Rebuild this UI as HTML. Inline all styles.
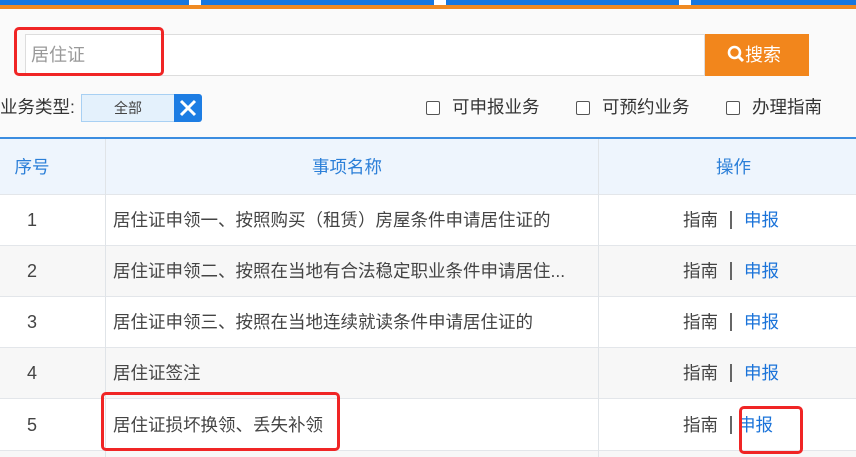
<!DOCTYPE html>
<html><head><meta charset="utf-8"><style>
*{margin:0;padding:0;box-sizing:border-box}
html,body{width:856px;height:457px;overflow:hidden}
body{background:#fafafa;font-family:"Liberation Sans","Noto Sans CJK SC",sans-serif;position:relative}
.a{position:absolute}
.gap{background:#fff;top:0;height:5px}
.row{position:absolute;left:0;width:856px;height:51px;border-bottom:1px solid #e3e6ea;font-size:17.5px;color:#444}
.row div{position:absolute;top:0;line-height:51px}
.n{left:0;width:64px;text-align:center;font-size:18px}
.t{left:113px}
.op{left:683px;color:#444}
.op span{color:#1a73d9}
.op i{font-style:normal;display:inline-block;width:2px;height:18px;background:#666;vertical-align:-3px;margin:0 12px}
.red{position:absolute;border:3px solid #f02525;border-radius:5px}
.cb{display:inline-block;width:14px;height:14px;border:1px solid #555;border-radius:2px;background:#fff;vertical-align:-2px;margin-right:12px}
</style></head><body>
<div class="a" style="left:0;top:0;width:856px;height:5px;background:#1677e0"></div>
<div class="a" style="left:0;top:5px;width:856px;height:4px;background:#f08a22"></div>
<div class="a gap" style="left:189px;width:12px"></div>
<div class="a gap" style="left:434px;width:12px"></div>
<div class="a gap" style="left:679px;width:12px"></div>

<div class="a" style="left:25px;top:34px;width:680px;height:42px;background:#fff;border:1px solid #ddd;font-size:18px;color:#999;line-height:40px;padding-left:5px">居住证</div>
<div class="a" style="left:705px;top:34px;width:104px;height:42px;background:#f2861c;color:#fff;font-size:18px;line-height:42px;padding-left:22px">
<svg width="18" height="18" viewBox="0 0 18 18" style="vertical-align:-2px"><circle cx="7.5" cy="7.5" r="5.5" fill="none" stroke="#fff" stroke-width="2.6"/><path d="M11 11l5 5" stroke="#fff" stroke-width="3"/></svg>搜索</div>
<div class="red" style="left:14px;top:27px;width:150px;height:49px"></div>

<div class="a" style="left:0;top:93px;font-size:17.5px;color:#333;line-height:28px">业务类型:</div>
<div class="a" style="left:81px;top:94px;width:94px;height:28px;background:#e4f1fc;border:1px solid #a8d0f3;font-size:14px;color:#444;text-align:center;line-height:26px">全部</div>
<div class="a" style="left:174px;top:94px;width:28px;height:28px;background:#1d7de3;border-radius:0 3px 3px 0">
<svg width="28" height="28" viewBox="0 0 28 28"><path d="M7 7l14 14M21 7L7 21" stroke="#fff" stroke-width="3"/></svg></div>
<div class="a" style="left:426px;top:93px;font-size:17.5px;color:#333;line-height:28px;white-space:nowrap"><span class="cb"></span>可申报业务</div>
<div class="a" style="left:576px;top:93px;font-size:17.5px;color:#333;line-height:28px;white-space:nowrap"><span class="cb"></span>可预约业务</div>
<div class="a" style="left:726px;top:93px;font-size:17.5px;color:#333;line-height:28px;white-space:nowrap"><span class="cb"></span>办理指南</div>

<div class="a" style="left:0;top:137px;width:856px;height:58px;background:#eef5fd;border-top:2px solid #3b8de0;border-bottom:1px solid #e3e6ea;font-size:17.5px;color:#2b7fd8">
<div class="a" style="left:0;width:64px;text-align:center;line-height:56px">序号</div>
<div class="a" style="left:312px;line-height:56px">事项名称</div>
<div class="a" style="left:716px;line-height:56px">操作</div>
</div>
<div class="row" style="top:195px;background:#fff"><div class="n">1</div><div class="t">居住证申领一、按照购买（租赁）房屋条件申请居住证的</div><div class="op">指南<i></i><span>申报</span></div></div>
<div class="row" style="top:246px;background:#f7f7f7"><div class="n">2</div><div class="t">居住证申领二、按照在当地有合法稳定职业条件申请居住...</div><div class="op">指南<i></i><span>申报</span></div></div>
<div class="row" style="top:297px;background:#fff"><div class="n">3</div><div class="t">居住证申领三、按照在当地连续就读条件申请居住证的</div><div class="op">指南<i></i><span>申报</span></div></div>
<div class="row" style="top:348px;background:#f7f7f7"><div class="n">4</div><div class="t">居住证签注</div><div class="op">指南<i></i><span>申报</span></div></div>
<div class="row" style="top:399px;background:#fff;height:52px"><div class="n" style="line-height:52px">5</div><div class="t" style="line-height:52px">居住证损坏换领、丢失补领</div><div class="op" style="line-height:52px">指南<i style="margin-right:6px"></i><span>申报</span></div></div>
<div class="a" style="left:0;top:451px;width:856px;height:6px;background:#f7f7f7"></div>
<div class="a" style="left:105px;top:139px;width:1px;height:318px;background:#e0e4e8"></div>
<div class="a" style="left:598px;top:139px;width:1px;height:318px;background:#e0e4e8"></div>
<div class="red" style="left:101px;top:392px;width:239px;height:59px"></div>
<div class="red" style="left:739px;top:406px;width:64px;height:48px"></div>
</body></html>
